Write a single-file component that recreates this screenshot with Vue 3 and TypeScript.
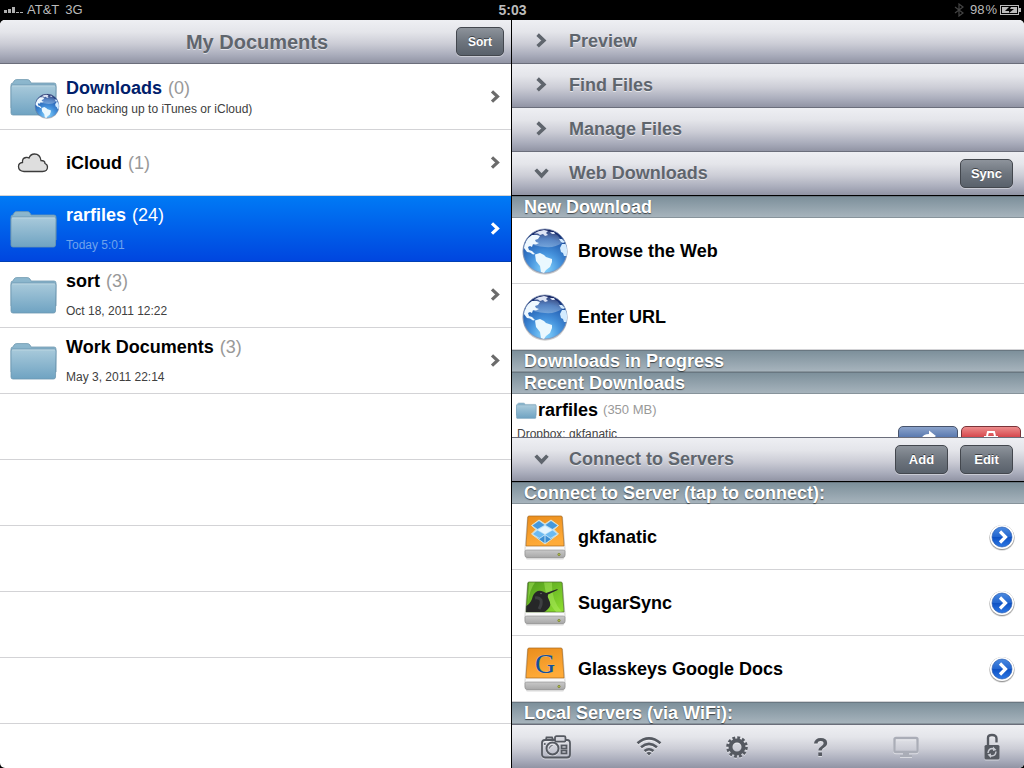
<script setup lang="ts">
interface Folder {
  name: string
  count: number
  note: string
  icon: 'folder' | 'cloud'
  globe?: boolean
  tone?: string
}

interface Server {
  name: string
  icon: string
}

interface Tool {
  label: string
  icon: string
  width: number
  height: number
}

const folders: Folder[] = [
  { name: 'Downloads', count: 0, note: '(no backing up to iTunes or iCloud)', icon: 'folder', globe: true, tone: 'navy' },
  { name: 'iCloud', count: 1, note: '', icon: 'cloud' },
  { name: 'rarfiles', count: 24, note: 'Today 5:01', icon: 'folder', tone: 'selected' },
  { name: 'sort', count: 3, note: 'Oct 18, 2011 12:22', icon: 'folder' },
  { name: 'Work Documents', count: 3, note: 'May 3, 2011 22:14', icon: 'folder' },
]

const emptyRows = 6
const closedPanels = ['Preview', 'Find Files', 'Manage Files']
const webActions = ['Browse the Web', 'Enter URL']

const servers: Server[] = [
  { name: 'gkfanatic', icon: 'dropbox' },
  { name: 'SugarSync', icon: 'bird' },
  { name: 'Glasskeys Google Docs', icon: 'google' },
]

const tools: Tool[] = [
  { label: 'Camera', icon: 'camera', width: 30, height: 24 },
  { label: 'WiFi sharing', icon: 'wifi', width: 26, height: 20 },
  { label: 'Settings', icon: 'gear', width: 22, height: 22 },
  { label: 'Help', icon: 'help', width: 16, height: 24 },
  { label: 'Display', icon: 'display', width: 26, height: 22 },
  { label: 'Lock', icon: 'lock', width: 16, height: 28 },
]
</script>

<template>
  <svg class="sprites" width="0" height="0" aria-hidden="true">
    <defs>
      <linearGradient id="folderFront" x1="0" y1="0" x2="0" y2="1">
        <stop offset="0" stop-color="#a9cadb" />
        <stop offset="1" stop-color="#6fa3c2" />
      </linearGradient>
      <linearGradient id="folderBack" x1="0" y1="0" x2="0" y2="1">
        <stop offset="0" stop-color="#8fb9cf" />
        <stop offset="1" stop-color="#6b9bb8" />
      </linearGradient>
      <radialGradient id="sea" cx="0.5" cy="0.9" r="0.9">
        <stop offset="0" stop-color="#86d6ff" />
        <stop offset="0.4" stop-color="#4592dc" />
        <stop offset="0.75" stop-color="#245fb2" />
        <stop offset="1" stop-color="#0c1450" />
      </radialGradient>
      <linearGradient id="gloss" x1="0" y1="0" x2="0" y2="1">
        <stop offset="0" stop-color="#fff" stop-opacity="0.15" />
        <stop offset="1" stop-color="#fff" stop-opacity="0.3" />
      </linearGradient>
      <linearGradient id="orange" x1="0" y1="0" x2="0.3" y2="1">
        <stop offset="0" stop-color="#ea8d1c" />
        <stop offset="1" stop-color="#ffab38" />
      </linearGradient>
      <linearGradient id="green" x1="0" y1="0" x2="1" y2="1">
        <stop offset="0" stop-color="#4f9a1c" />
        <stop offset="1" stop-color="#8fe030" />
      </linearGradient>
      <linearGradient id="driveFront" x1="0" y1="0" x2="0" y2="1">
        <stop offset="0" stop-color="#c9c9c9" />
        <stop offset="1" stop-color="#a8a8a8" />
      </linearGradient>
      <linearGradient id="blueDot" x1="0" y1="0" x2="0" y2="1">
        <stop offset="0" stop-color="#4b8ae0" />
        <stop offset="0.48" stop-color="#2467d0" />
        <stop offset="0.52" stop-color="#0f52c4" />
        <stop offset="1" stop-color="#2d78e4" />
      </linearGradient>

      <symbol id="folder" viewBox="0 0 48 38">
        <path d="M1 7 Q1 5 3 5 L4 3 Q5 1.600 7 1.600 L17 1.600 Q19 1.600 20 3 L21 5 L44 5 Q46 5 46 7 L46 30 L1 30Z" fill="url(#folderBack)" stroke="#6f98af" stroke-width="0.8" />
        <path d="M1 9 Q1 7 3 7 L44 7 Q46 7 46 9 L45.500 35 Q45.500 37 43.500 37 L3 37 Q1 37 1 35Z" fill="url(#folderFront)" stroke="#6d97b0" stroke-width="0.8" />
        <path d="M2 8 L45 8" stroke="#c0d9e5" stroke-width="0.8" />
      </symbol>

      <symbol id="globe" viewBox="0 0 48 48">
        <circle cx="24" cy="25.500" r="22.300" fill="#000" opacity="0.12" />
        <circle cx="24" cy="25" r="22.500" fill="#000" opacity="0.1" />
        <circle cx="24" cy="24" r="22" fill="url(#sea)" stroke="#7c8fb4" stroke-width="0.8" />
        <path d="M7 16 Q12 4 24 3.500 Q37 4 41 16 Q34 21 24 20 Q14 19 7 16Z" fill="url(#gloss)" />
        <path d="M4.500 16 Q6 11 11 8 L16 8 L19 9 L17 12 L14 13 L15 15 L18 16 L15 17.500 L12 17 L11 20 L9 19 L7 20 L8 23 L11 24 L14 27 L12 27.500 L9 25.500 L6 25 L3 21 Q3 18 4.500 16Z" fill="#eef8ff" />
        <path d="M13 6.500 Q17 3.500 23 3 L27 4 L25 6 L27 8 L24 9 L22 7 L19 8 L17 6.500Z M29 5 L33 5 L34 7 L31 7Z" fill="#dfe6f6" />
        <path d="M14 27.500 L19 26 L23 28 L25 30 L31 32 L31 35 L29 40 L25 43 L23 46 L20 45 L19 39 L15 34Z" fill="#eaf8ff" />
        <path d="M38 12 L41 12 L44 15 L42 16 L40 15Z M41 17 L44.500 17 Q47 22 45.500 29 L43 29 L42 26 L40 25 L39 21Z" fill="#d3ebff" />
      </symbol>

      <symbol id="cloud" viewBox="0 0 32 22">
        <path d="M7 19.500 Q1.500 19 1.500 14.500 Q1.500 11 5.500 10.500 Q5 6 9 5.500 Q11 5.300 12 6 Q13.500 2 17.500 2 Q23 2 24 8.500 Q28 8.500 28 11.500 Q30.500 12.500 30.500 15 Q30.500 19.500 25.500 19.500Z" fill="#dedede" stroke="#3c3c3c" stroke-width="1.300" />
      </symbol>

      <symbol id="drive" viewBox="0 0 42 46">
        <rect x="2" y="42.500" width="38" height="3" rx="1.500" fill="#000" opacity="0.15" />
        <path d="M3.500 3 L38.500 3 L41 35 L41 41 Q41 43.500 39 43.500 L3 43.500 Q1 43.500 1 41 L1 35Z" fill="#fafafa" stroke="#bbb" stroke-width="0.6" />
        <path d="M1 37 Q1 36 3 36 L39 36 Q41 36 41 37 L41 41 Q41 43.500 39 43.500 L3 43.500 Q1 43.500 1 41Z" fill="url(#driveFront)" stroke="#8c8c8c" stroke-width="0.600" />
        <circle cx="35" cy="40.500" r="1.200" fill="#b4bf4a" stroke="#68702a" stroke-width="0.600" />
      </symbol>

      <symbol id="dropbox" viewBox="0 0 42 46">
        <use href="#drive" width="42" height="46" />
        <path d="M5 2 L37 2 Q38 2 38.100 3 L40 32 L2 32 L3.900 3 Q4 2 5 2Z" fill="url(#orange)" stroke="#a8681c" stroke-width="0.7" />
        <path d="M15 6 L21 10 L27 6 L34.500 11.500 L30 15.500 L34.500 20 L30.500 23 L21 30 L11.500 23 L7.500 20 L12 15.500 L7.500 11.500Z" fill="#bfe2f7" stroke="#dde2cf" stroke-width="1" />
        <path d="M15 7 L20.500 11 L13.500 15 L8.500 11.500Z M27 7 L33.500 11.500 L28.500 15 L21.500 11Z" fill="#4598dc" />
        <path d="M13.500 16.500 L20.500 20.500 L15.500 24 L9 20Z M28.500 16.500 L33 20 L26.500 24 L21.500 20.500Z" fill="#6cbaf0" />
        <path d="M21 12 L28 16 L21 20 L14 16Z" fill="#e6f6ff" />
        <path d="M12 23 L15.500 25 L20.500 21.500 L20.500 29Z M30 23 L26.500 25 L21.500 21.500 L21.500 29Z" fill="#3d8ed2" />
      </symbol>

      <symbol id="bird" viewBox="0 0 42 46">
        <use href="#drive" width="42" height="46" />
        <path d="M5 2 L37 2 Q38 2 38.100 3 L40 32 L2 32 L3.900 3 Q4 2 5 2Z" fill="url(#green)" stroke="#4a6a2a" stroke-width="0.7" />
        <path d="M5 2.500 L11 2.500 Q6 9 4 22Z M20 2.500 L28 2.500 Q27 20 38 32 L32 32 Q22 21 20 2.500Z" fill="#b2ef64" opacity="0.45" />
        <path d="M2 32 L2.300 26 Q6 24 8 19 Q9 14 12 12 Q15 10 19 11.500 L22 13 L33.500 9 L33.500 10 L24 14.500 Q23 17 25 20 Q28 25 24 29 Q21 32 20 32Z" fill="#262728" />
        <path d="M11 18 Q15 17 17 20 Q18 24 15 29" fill="none" stroke="#3e4042" stroke-width="3" />
        <circle cx="17" cy="13.500" r="0.700" fill="#777" />
      </symbol>

      <symbol id="google" viewBox="0 0 42 46">
        <use href="#drive" width="42" height="46" />
        <path d="M5 2 L37 2 Q38 2 38.100 3 L40 32 L2 32 L3.900 3 Q4 2 5 2Z" fill="url(#orange)" stroke="#a8681c" stroke-width="0.7" />
        <text x="21" y="27" text-anchor="middle" font-family="Liberation Serif, serif" font-size="28" fill="#14509b" stroke="#e6c58a" stroke-width="0.600" paint-order="stroke">G</text>
      </symbol>

      <symbol id="go" viewBox="0 0 28 28">
        <circle cx="14" cy="15" r="12.700" fill="#000" opacity="0.15" />
        <circle cx="14" cy="14.500" r="12.400" fill="#000" opacity="0.3" />
        <circle cx="14" cy="14" r="12" fill="#fff" />
        <circle cx="14" cy="14" r="10" fill="url(#blueDot)" stroke="#1b4fa8" stroke-width="0.600" />
        <path d="M12 8.500 L17.500 14 L12 19.500" fill="none" stroke="#fff" stroke-width="3.200" />
      </symbol>

      <symbol id="chevron" viewBox="0 0 16 16">
        <path d="M5 2.300 L10.500 7.500 L5 12.700" fill="none" stroke="currentColor" stroke-width="3.200" />
      </symbol>

      <symbol id="camera" viewBox="0 0 30 24">
        <g fill="none" stroke="currentColor" stroke-width="1.800">
          <rect x="1" y="5" width="28" height="17.500" rx="3" />
          <path d="M5 4.500 L5.500 2.500 L11 2.500 L12 4.500" />
          <rect x="14" y="1.200" width="10.500" height="5.500" rx="1.500" fill="#d5d6dd" />
          <circle cx="11.500" cy="13.500" r="6" stroke-width="2" />
          <path d="M8.500 13.500 Q8.500 10.500 11.500 10.500" stroke-width="1" />
          <rect x="20.500" y="10.500" width="5" height="3" />
          <rect x="20.500" y="15.500" width="5" height="3" />
        </g>
        <circle cx="3.800" cy="9" r="1" fill="currentColor" />
      </symbol>

      <symbol id="wifi" viewBox="0 0 26 20">
        <g fill="none" stroke="currentColor" stroke-width="2.600">
          <path d="M1.500 6.300 Q13 -3.400 24.500 6.300" />
          <path d="M5 10.300 Q13 3.600 21 10.300" />
          <path d="M8.500 14.100 Q13 10.400 17.500 14.100" />
        </g>
        <path d="M10.500 16 Q13 14 15.500 16 L13 18.500Z" fill="currentColor" />
      </symbol>

      <symbol id="gear" viewBox="0 0 22 22">
        <circle cx="11" cy="11" r="6.500" fill="none" stroke="currentColor" stroke-width="4" />
        <circle cx="11" cy="11" r="9.300" fill="none" stroke="currentColor" stroke-width="3" stroke-dasharray="2.800 2.069" />
      </symbol>

      <symbol id="display" viewBox="0 0 26 22">
        <rect x="1.500" y="2" width="23" height="14" rx="1.500" fill="none" stroke="currentColor" stroke-width="2.400" />
        <path d="M10 17 L16 17 L16 19 L19 19 L19 21 L7 21 L7 19 L10 19Z" fill="currentColor" />
      </symbol>

      <symbol id="lock" viewBox="0 0 16 28">
        <path d="M4 12.500 L4 5 Q4 2 8 2 Q12.500 2 12.500 5.500 L12.500 9.500" fill="none" stroke="currentColor" stroke-width="2.400" />
        <rect x="0.500" y="12" width="15" height="14.500" rx="1.500" fill="currentColor" />
        <path d="M4 20 Q4.500 15.500 8.500 15.500 L10 16 M12 18.500 Q11.500 23 7.500 23 L6 22.500" fill="none" stroke="#c8cad2" stroke-width="1.500" />
        <path d="M9 13.500 L12.500 17 L9 18Z M7 25 L3.500 21.500 L7 20.500Z" fill="#c8cad2" />
      </symbol>
    </defs>
  </svg>

  <div class="screen">
    <header class="status">
      <div class="carrier">
        <svg width="20" height="8" viewBox="0 0 20 8" aria-hidden="true">
          <path d="M0 4h3v3H0zM4 3h3v4H4zM8 1h3v6H8zM12 6h3v1h-3zM16 6h3v1h-3z" fill="#b0b0b0" />
        </svg>
        <span>AT&amp;T</span>
        <span class="network">3G</span>
      </div>
      <time class="clock">5:03</time>
      <div class="power">
        <svg width="10" height="14" viewBox="0 0 10 14" aria-hidden="true">
          <path d="M1 4 L9 10 L5 13 L5 1 L9 4 L1 10" fill="none" stroke="#444" stroke-width="1.200" />
        </svg>
        <span class="charge">98<span class="percent">%</span></span>
        <svg width="21" height="10" viewBox="0 0 21 10" aria-hidden="true">
          <rect x="0.500" y="0.500" width="18" height="9" fill="none" stroke="#bbb" />
          <rect x="2" y="2" width="15" height="6" fill="#bbb" />
          <rect x="19" y="3" width="2" height="4" fill="#bbb" />
          <path d="M9 2 L5 6 L9 6 L9 8 L14 4 L10 4 L11 2Z" fill="#000" />
        </svg>
      </div>
    </header>

    <main class="panes">
      <section class="documents">
        <div class="bar title-bar">
          <h1>My Documents</h1>
          <button type="button" class="pill sort">Sort</button>
        </div>
        <ul class="rows">
          <li v-for="folder in folders" :key="folder.name">
            <button type="button" class="row folder-row" :class="folder.tone">
              <span class="folder-icon" :class="folder.icon">
                <svg v-if="folder.icon === 'folder'" width="48" height="38" aria-hidden="true"><use href="#folder" /></svg>
                <svg v-else width="32" height="22" aria-hidden="true"><use href="#cloud" /></svg>
                <svg v-if="folder.globe" class="badge" width="26" height="26" aria-hidden="true"><use href="#globe" /></svg>
              </span>
              <span class="folder-text">
                <span class="name"><b>{{ folder.name }}</b> <span class="count">({{ folder.count }})</span></span>
                <span v-if="folder.note" class="note">{{ folder.note }}</span>
              </span>
              <svg class="arrow" width="16" height="16" aria-hidden="true"><use href="#chevron" /></svg>
            </button>
          </li>
          <li v-for="n in emptyRows" :key="n" class="row" aria-hidden="true"></li>
        </ul>
      </section>

      <section class="tools-pane">
        <div v-for="panel in closedPanels" :key="panel" class="bar">
          <button type="button" class="toggle" aria-expanded="false">
            <svg width="18" height="18" aria-hidden="true"><use href="#chevron" /></svg>
            {{ panel }}
          </button>
        </div>

        <div class="bar open">
          <button type="button" class="toggle" aria-expanded="true">
            <svg width="18" height="18" aria-hidden="true"><use href="#chevron" /></svg>
            Web Downloads
          </button>
          <button type="button" class="pill">Sync</button>
        </div>
        <div class="panel">
          <h2>New Download</h2>
          <button v-for="action in webActions" :key="action" type="button" class="row item">
            <svg width="48" height="48" aria-hidden="true"><use href="#globe" /></svg>
            <b>{{ action }}</b>
          </button>
          <h2>Downloads in Progress</h2>
          <h2>Recent Downloads</h2>
          <div class="recent">
            <div class="recent-text">
              <div class="recent-name">
                <svg width="21" height="17" aria-hidden="true"><use href="#folder" /></svg>
                <b>rarfiles</b>
                <span>(350 MB)</span>
              </div>
              <div class="source">Dropbox: gkfanatic</div>
            </div>
            <div class="recent-actions">
              <button type="button" class="share" aria-label="Share">
                <svg width="18" height="18" viewBox="0 0 18 18" aria-hidden="true">
                  <path d="M2 13 Q2 5 10 5 L10 1.500 L17 7 L10 12 L10 9 Q5 9 2 13Z" fill="#fff" />
                </svg>
              </button>
              <button type="button" class="delete" aria-label="Delete">
                <svg width="18" height="18" viewBox="0 0 18 18" aria-hidden="true">
                  <path d="M5 7 L6 3 L12 3 L13 7 M2 8 L16 8 M4 9 L5 17 L13 17 L14 9" fill="none" stroke="#fff" stroke-width="2" />
                </svg>
              </button>
            </div>
          </div>
        </div>

        <div class="bar open raised">
          <button type="button" class="toggle" aria-expanded="true">
            <svg width="18" height="18" aria-hidden="true"><use href="#chevron" /></svg>
            Connect to Servers
          </button>
          <button type="button" class="pill">Add</button>
          <button type="button" class="pill">Edit</button>
        </div>
        <div class="panel">
          <h2>Connect to Server (tap to connect):</h2>
          <button v-for="server in servers" :key="server.name" type="button" class="row item server">
            <svg width="42" height="46" aria-hidden="true"><use :href="'#' + server.icon" /></svg>
            <b>{{ server.name }}</b>
            <svg class="go" width="28" height="28" aria-hidden="true"><use href="#go" /></svg>
          </button>
          <h2>Local Servers (via WiFi):</h2>
        </div>

        <nav class="bar toolbar" aria-label="Tools">
          <button v-for="tool in tools" :key="tool.icon" type="button" class="tool" :class="tool.icon" :aria-label="tool.label">
            <template v-if="tool.icon === 'help'">?</template>
            <svg v-else :width="tool.width" :height="tool.height" aria-hidden="true"><use :href="'#' + tool.icon" /></svg>
          </button>
        </nav>
      </section>
    </main>
  </div>
</template>

<style>
body {
  background: #000;
}
</style>

<style scoped>
* {
  box-sizing: border-box;
}

button {
  margin: 0;
  padding: 0;
  border: 0;
  background: none;
  color: inherit;
  font: inherit;
  text-align: left;
}

svg {
  display: block;
  flex: none;
}

.sprites {
  position: absolute;
}

.screen {
  display: flex;
  flex-direction: column;
  height: 100vh;
  overflow: hidden;
  background: #000;
  color: #000;
  font-family: "Liberation Sans", Arial, sans-serif;
  font-size: 18px;
  line-height: 22px;
}

.status {
  display: grid;
  grid-template-columns: 1fr auto 1fr;
  align-items: center;
  height: 20px;
  padding: 0 3px 0 4px;
  color: #bbb;
  font-size: 13px;
  line-height: 20px;
}

.carrier,
.power {
  display: flex;
  align-items: center;
  gap: 3px;
}

.network {
  margin-left: 3px;
}

.clock {
  font-size: 14px;
  font-weight: bold;
}

.power {
  justify-content: flex-end;
}

.charge {
  margin-left: 3px;
}

.percent {
  margin-left: 1px;
}

.panes {
  display: grid;
  flex: 1;
  grid-template-columns: 1fr 1fr;
  min-height: 0;
  overflow: hidden;
  border-radius: 5px;
}

.documents,
.tools-pane {
  display: flex;
  flex-direction: column;
  min-width: 0;
  min-height: 0;
  background: #fff;
}

.documents {
  border-right: 1px solid #000;
}

.bar {
  display: flex;
  flex: none;
  align-items: center;
  gap: 12px;
  height: 44px;
  padding-right: 11px;
  border-bottom: 1px solid #6b6e7b;
  background: linear-gradient(#eeeff3, #e4e5ea 28%, #cccdd6 55%, #a9acbb 82%, #9194a4);
  color: #5f656d;
  text-shadow: 0 1px 0 rgba(255, 255, 255, 0.6);
}

.bar.open {
  border-color: #000;
}

.bar.raised {
  position: relative;
  box-shadow: 0 -1px 0 #6b6e7b;
}

.title-bar {
  display: grid;
  grid-template-columns: 1fr auto 1fr;
  padding-right: 7px;
  padding-left: 10px;
}

h1 {
  grid-column: 2;
  margin: 0;
  font-size: 20px;
  line-height: 24px;
}

.pill {
  min-width: 53px;
  height: 29px;
  padding: 0 10px;
  border: 1px solid #43474e;
  border-radius: 5px;
  background: linear-gradient(#8d939b, #6e757e 50%, #59616b);
  box-shadow: 0 1px 0 rgba(255, 255, 255, 0.4);
  color: #fff;
  font-size: 13px;
  font-weight: bold;
  text-align: center;
  text-shadow: 0 -1px 0 rgba(0, 0, 0, 0.5);
}

.sort {
  justify-self: end;
  min-width: 48px;
  font-size: 12px;
}

.rows {
  flex: 1;
  min-height: 0;
  margin: 0;
  padding: 0;
  overflow: hidden;
  list-style: none;
}

.row {
  display: flex;
  align-items: center;
  width: 100%;
  height: 66px;
  border-bottom: 1px solid #d3d3d6;
}

.folder-row {
  padding: 0 8px 0 10px;
}

.folder-icon {
  position: relative;
  display: flex;
  flex: none;
  justify-content: center;
  width: 48px;
  margin-right: 8px;
}

.folder-icon.cloud {
  padding-right: 3px;
}

.badge {
  position: absolute;
  right: -2px;
  bottom: -3px;
}

.folder-text {
  display: flex;
  flex: 1;
  flex-direction: column;
  gap: 11px;
  min-width: 0;
}

.count {
  margin-left: 1px;
  color: #999;
}

.note {
  color: #404040;
  font-size: 12px;
  line-height: 16px;
}

.navy .name b {
  color: #00206b;
}

.navy .folder-text {
  gap: 2px;
}

.arrow {
  color: #6b6b6b;
}

.selected {
  border-color: #0040b4;
  background: linear-gradient(#007af5, #0046df);
  color: #fff;
}

.selected .count,
.selected .arrow {
  color: #fff;
}

.selected .note {
  color: #6fa3ec;
}

.toggle {
  display: flex;
  flex: 1;
  align-items: center;
  gap: 19px;
  height: 100%;
  padding: 0 0 2px 20px;
  font-weight: bold;
  text-shadow: inherit;
}

.open .toggle svg {
  transform: rotate(90deg);
}

.panel {
  flex: 1 1 0;
  min-height: 0;
  overflow: hidden;
}

h2 {
  height: 22px;
  margin: 0;
  padding-left: 12px;
  border-top: 1px solid #697781;
  border-bottom: 1px solid #87939b;
  background: linear-gradient(#7d909b, #a6b3bc);
  color: #fff;
  font-size: 18px;
  line-height: 21px;
  text-shadow: 0 1px 1px rgba(0, 0, 0, 0.6);
}

.item {
  gap: 9px;
  padding: 0 8px 0 9px;
}

.server {
  gap: 12px;
  padding-left: 12px;
}

.go {
  margin-left: auto;
}

.recent {
  display: flex;
  justify-content: space-between;
  padding: 5px 3px 0 4px;
}

.recent-name {
  display: flex;
  align-items: center;
  gap: 1px;
}

.recent-name span {
  margin-left: 4px;
  color: #999;
  font-size: 13px;
}

.source {
  padding: 5px 0 0 1px;
  color: #444;
  font-size: 12px;
  line-height: 16px;
}

.recent-actions {
  display: flex;
  gap: 3px;
  padding-top: 27px;
}

.share,
.delete {
  display: flex;
  justify-content: center;
  width: 60px;
  height: 30px;
  padding-top: 2px;
  border: 1px solid #47536b;
  border-radius: 5px;
  background: linear-gradient(#8ba3cb, #4669a5 50%);
}

.delete {
  border-color: #7a3439;
  background: linear-gradient(#ed8c8c, #cc2c33 50%);
}

.toolbar {
  justify-content: space-between;
  padding: 0 24px 0 29px;
  border-top: 1px solid #6b6e7b;
  border-bottom: 0;
}

.tool {
  color: #555961;
  filter: drop-shadow(0 1px 0 rgba(255, 255, 255, 0.5));
}

.help {
  font-size: 26px;
  font-weight: bold;
  line-height: 30px;
}

.display {
  color: #aaadb7;
}
</style>
